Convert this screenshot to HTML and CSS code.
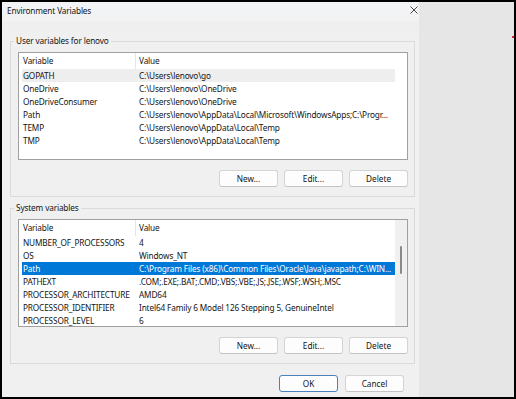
FILE: index.html
```html
<!DOCTYPE html>
<html lang="en">
<head>
    <meta charset="UTF-8">
    <meta name="viewport" content="width=device-width, initial-scale=1.0">
    <title>Environment Variables</title>
    <link rel="stylesheet" href="styles.css">
</head>
<body>
    <div class="screen">
        <div class="dialog">
            <div class="titlebar">
                <span class="title">Environment Variables</span>
                <svg class="close" width="8" height="8" viewBox="0 0 8 8">
                    <path d="M0.5 0.5 L7.5 7.5 M7.5 0.5 L0.5 7.5" stroke="#333" stroke-width="0.9" fill="none"/>
                </svg>
            </div>

            <div class="content">
                <fieldset class="group">
                    <legend>User variables for lenovo</legend>
                    <div class="list">
                        <div class="list-main">
                            <div class="list-header">
                                <div class="hcell">Variable</div>
                                <div class="hcell">Value</div>
                            </div>
                            <div class="rows">
                                <div class="row inactive"><span>GOPATH</span><span>C:\Users\lenovo\go</span></div>
                                <div class="row"><span>OneDrive</span><span>C:\Users\lenovo\OneDrive</span></div>
                                <div class="row"><span>OneDriveConsumer</span><span>C:\Users\lenovo\OneDrive</span></div>
                                <div class="row"><span>Path</span><span>C:\Users\lenovo\AppData\Local\Microsoft\WindowsApps;C:\Progr...</span></div>
                                <div class="row"><span>TEMP</span><span>C:\Users\lenovo\AppData\Local\Temp</span></div>
                                <div class="row"><span>TMP</span><span>C:\Users\lenovo\AppData\Local\Temp</span></div>
                            </div>
                        </div>
                    </div>
                    <div class="buttons">
                        <button class="btn">New...</button>
                        <button class="btn">Edit...</button>
                        <button class="btn">Delete</button>
                    </div>
                </fieldset>

                <fieldset class="group system">
                    <legend>System variables</legend>
                    <div class="list">
                        <div class="list-main">
                            <div class="list-header">
                                <div class="hcell">Variable</div>
                                <div class="hcell">Value</div>
                            </div>
                            <div class="rows">
                                <div class="row"><span>NUMBER_OF_PROCESSORS</span><span>4</span></div>
                                <div class="row"><span>OS</span><span>Windows_NT</span></div>
                                <div class="row selected"><span>Path</span><span>C:\Program Files (x86)\Common Files\Oracle\Java\javapath;C:\WIN...</span></div>
                                <div class="row"><span>PATHEXT</span><span>.COM;.EXE;.BAT;.CMD;.VBS;.VBE;.JS;.JSE;.WSF;.WSH;.MSC</span></div>
                                <div class="row"><span>PROCESSOR_ARCHITECTURE</span><span>AMD64</span></div>
                                <div class="row"><span>PROCESSOR_IDENTIFIER</span><span>Intel64 Family 6 Model 126 Stepping 5, GenuineIntel</span></div>
                                <div class="row"><span>PROCESSOR_LEVEL</span><span>6</span></div>
                            </div>
                        </div>
                        <div class="scrollbar"><div class="thumb"></div></div>
                    </div>
                    <div class="buttons">
                        <button class="btn">New...</button>
                        <button class="btn">Edit...</button>
                        <button class="btn">Delete</button>
                    </div>
                </fieldset>

                <div class="footer">
                    <button class="btn default">OK</button>
                    <button class="btn">Cancel</button>
                </div>
            </div>
        </div>
        <div class="desk">
            <span class="dot"></span>
        </div>
    </div>
</body>
</html>
```

FILE: styles.css
```css
* {
    box-sizing: border-box;
}
html, body {
    height: 100%;
}
body {
    margin: 0;
    padding: 2px;
    background: #000;
    font-family: 'Noto Sans', sans-serif;
    font-size: 8.25px;
    letter-spacing: -0.15px;
    color: #141414;
    overflow: hidden;
}
.screen {
    display: flex;
    height: 395px;
}
.dialog {
    width: 417px;
    background: #f0f0f0;
    display: flex;
    flex-direction: column;
}
.desk {
    flex: 1;
    background: #e6e6e6;
    position: relative;
}
.dot {
    position: absolute;
    left: 93px;
    top: 34px;
    width: 2px;
    height: 2px;
    background: #e02020;
}
.titlebar {
    height: 20px;
    padding: 2px 1px 0 5px;
    display: flex;
    justify-content: space-between;
    align-items: flex-start;
    background: linear-gradient(#f3f4f6, #f2f2f3);
    line-height: 14px;
}
.close {
    margin-top: 2px;
}
.content {
    flex: 1;
    padding: 12px 4px 0 8px;
    background: linear-gradient(#efefef, #f0f0f0 20px);
}
.group {
    margin: 0 0 4px 0;
    padding: 4px 6px 9px 7px;
    border: 1px solid #dadada;
    min-width: 0;
}
.group legend {
    margin-left: -4px;
    padding: 0 2px;
    line-height: 14px;
}
.list {
    height: 108px;
    border: 1px solid #a0a0a0;
    background: #fff;
    display: flex;
    overflow: hidden;
}
.list-main {
    width: 376px;
}
.list-header {
    display: grid;
    grid-template-columns: 117px 1fr;
    height: 16px;
    line-height: 16px;
}
.hcell {
    padding-left: 4px;
    border-right: 1px solid #e5e5e5;
}
.hcell + .hcell {
    padding-left: 3px;
    border-right: none;
}
.rows {
    margin-left: 3px;
    width: 373px;
}
.row {
    display: grid;
    grid-template-columns: 117px 1fr;
    height: 13px;
    line-height: 13px;
    white-space: nowrap;
    overflow: hidden;
}
.row span {
    padding-left: 1px;
    overflow: hidden;
}
.row span + span {
    padding-left: 0;
}
.row.inactive {
    background: #eeeeee;
}
.row.selected {
    background: #0078d7;
    color: #fff;
}
.scrollbar {
    flex: 1;
    background: #f0f0f0;
}
.thumb {
    width: 2px;
    height: 28px;
    margin: 26px 0 0 5px;
    border-radius: 1px;
    background: #8a8a8a;
}
.buttons, .footer {
    display: flex;
    justify-content: flex-end;
    gap: 6px;
}
.buttons {
    margin-top: 10px;
}
.footer {
    margin-top: 11px;
    padding-right: 11px;
    gap: 7px;
}
.btn {
    width: 59px;
    height: 17px;
    padding: 0;
    font: inherit;
    color: #141414;
    background: #fdfdfd;
    border: 1px solid #d4d4d4;
    border-bottom-color: #c4c4c4;
    border-radius: 3px;
}
.btn.default {
    border-color: #4a7fc0;
}
```
